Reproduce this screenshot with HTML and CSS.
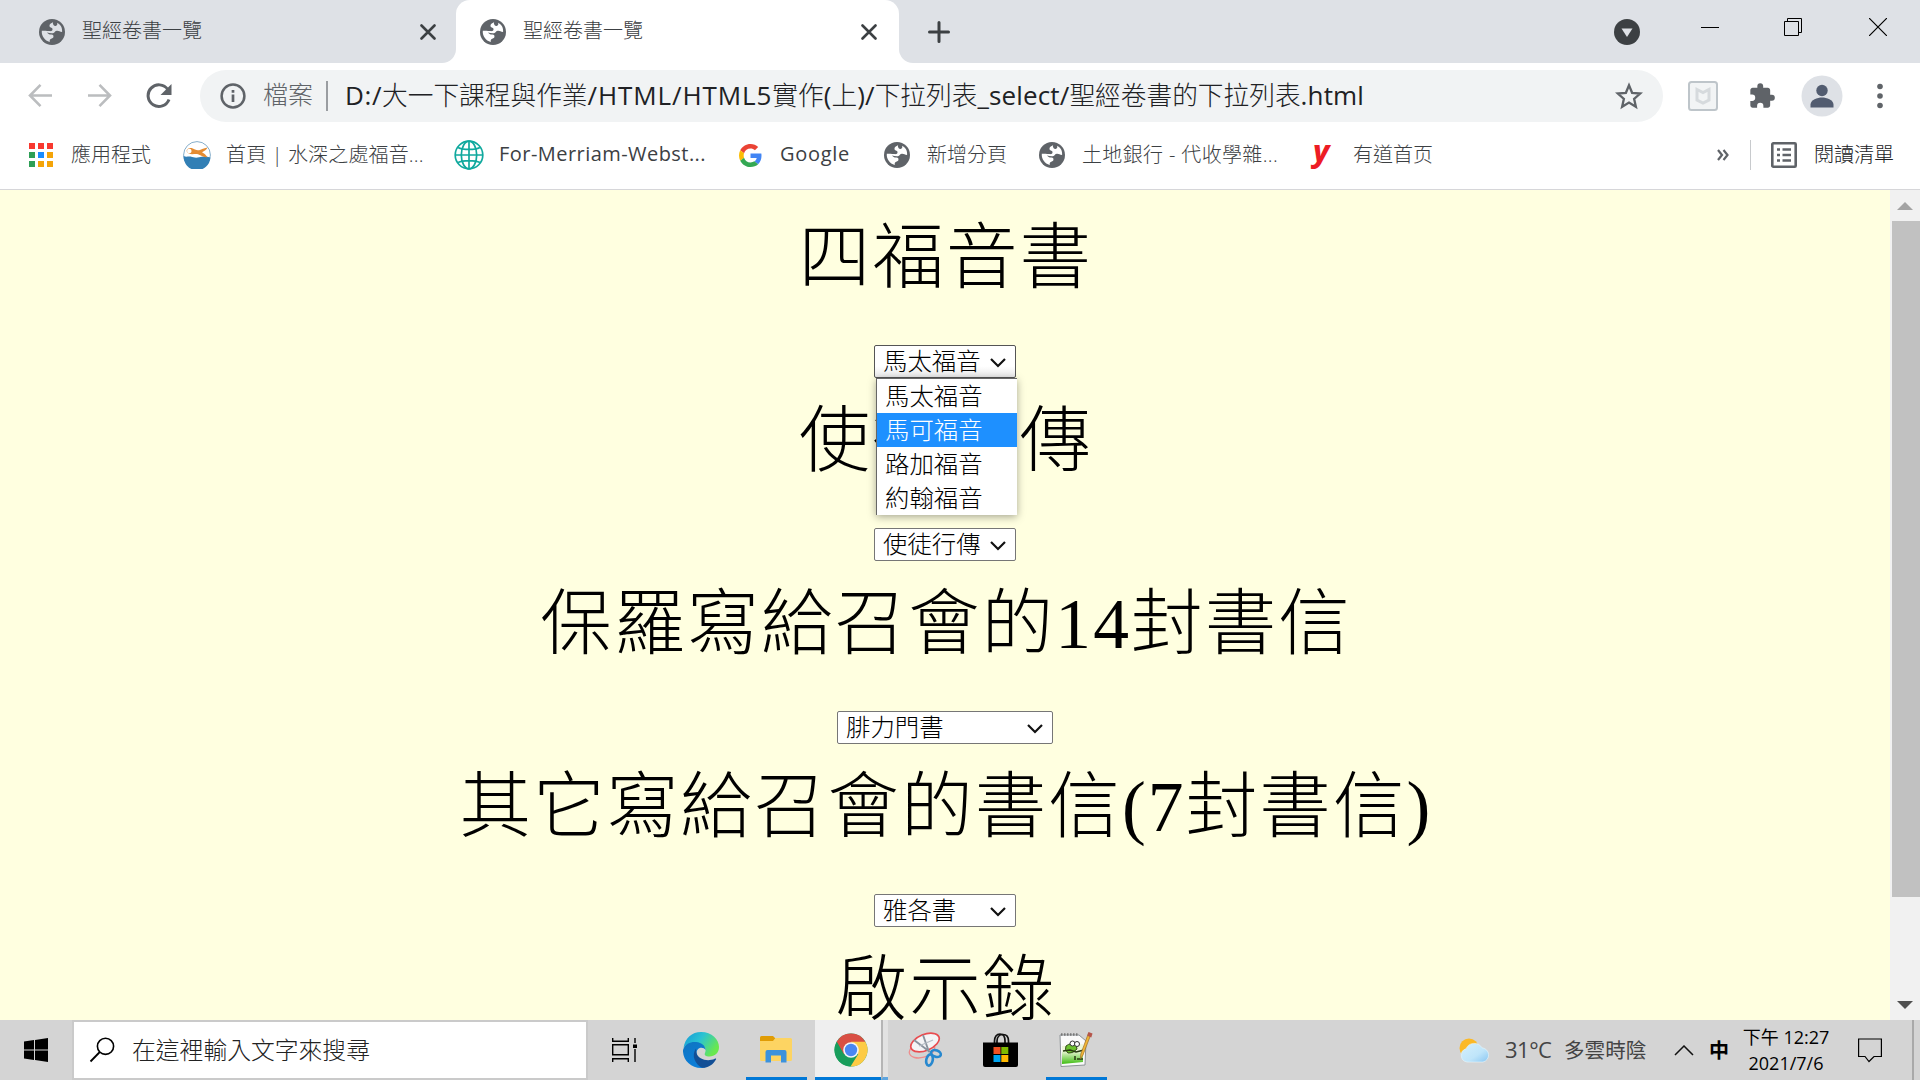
FILE: index.html
```html
<!DOCTYPE html>
<html lang="zh-Hant">
<head>
<meta charset="utf-8">
<title>聖經卷書一覽</title>
<link rel="stylesheet" href="styles.css">
</head>
<body>
<svg class="defs" width="0" height="0" aria-hidden="true">
  <symbol id="globe" viewBox="0 0 26 26">
    <circle cx="13" cy="13" r="13" fill="#5f6368"/>
    <path d="M14.500 2.800c-1 1.200-4 1.500-4 4 0 2.200 2.600 1.300 3 3.200.3 1.700-1.300 2.300-3.200 2.100-1.800-.2-3.300-.6-7.500-.4-.5 5.300 3 9.900 8 11.200-.3-1.700 0-2.600 1.400-3.200 1.600-.7 2.600-1.200 2.200-3-.3-1.300-2-1.200-3.500-1.200-1.100 0-1.900-.9-2.900-1.900 2.200.3 5 1 6.600.3 1.800-.8 1.300-2 3.300-2.100 2.200-.1 2.800 1 5.200 1.300.5-4.500-1.700-7.600-5-9.300.6 1.800-.1 3-1.500 3.200-1.700.2-2.300-1.200-2.600-2.200-.2-.8-.1-1.300.5-2z" fill="var(--land)"/>
  </symbol>
  <symbol id="close" viewBox="0 0 16 16"><path d="M1.500 1.500l13 13M14.500 1.500l-13 13" stroke="#3c4043" stroke-width="2.600" stroke-linecap="round"/></symbol>
  <symbol id="arrow" viewBox="0 0 18 11"><path d="M2 2l7 7 7-7" fill="none" stroke="#111" stroke-width="2.200"/></symbol>
</svg>

<header class="browser">
  <div class="tabstrip">
    <div class="tab">
      <svg class="favicon"><use href="#globe"/></svg>
      <span class="tab-title">聖經卷書一覽</span>
      <svg class="tab-close"><use href="#close"/></svg>
    </div>
    <div class="tab active">
      <svg class="favicon"><use href="#globe"/></svg>
      <span class="tab-title">聖經卷書一覽</span>
      <svg class="tab-close"><use href="#close"/></svg>
    </div>
    <div class="strip-rest">
      <svg class="plus" width="22" height="22" viewBox="0 0 22 22"><path d="M11 1.500v19M1.500 11h19" stroke="#3c4043" stroke-width="3" stroke-linecap="round"/></svg>
      <svg class="tab-search" width="26" height="26" viewBox="0 0 26 26"><circle cx="13" cy="13" r="13" fill="#3c4043"/><path d="M7.500 9.500h11L13 18z" fill="#dee1e6"/></svg>
      <div class="window-buttons">
        <svg width="18" height="18" viewBox="0 0 18 18"><path d="M0 9.500h18" stroke="#000"/></svg>
        <svg width="18" height="18" viewBox="0 0 18 18"><path d="M.5 3.500h14v14H.5zM3.500 3.500v-3h14v14h-3" fill="none" stroke="#000"/></svg>
        <svg width="18" height="18" viewBox="0 0 18 18"><path d="M0 0l18 18M18 0L0 18" stroke="#000" stroke-width="1.200"/></svg>
      </div>
    </div>
  </div>

  <div class="toolbar">
    <div class="nav">
      <svg width="25" height="25" viewBox="0 0 25 25"><path d="M24 12.500H2.500M12.500 1.800L2 12.500l10.500 10.700" fill="none" stroke="#bbbdbf" stroke-width="2.600"/></svg>
      <svg width="25" height="25" viewBox="0 0 25 25"><path d="M1 12.500h21.500M12.500 1.800L23 12.500 12.500 23.200" fill="none" stroke="#bbbdbf" stroke-width="2.600"/></svg>
      <svg width="26" height="26" viewBox="0 0 26 26"><path d="M21.800 6.500A10.800 10.800 0 1 0 23 16.500" fill="none" stroke="#5f6368" stroke-width="3"/><path d="M25.500 1v11H14.500z" fill="#5f6368"/></svg>
    </div>
    <div class="omnibox">
      <svg class="info" width="26" height="26" viewBox="0 0 26 26"><circle cx="13" cy="13" r="11.400" fill="none" stroke="#5f6368" stroke-width="2.500"/><path d="M13 11.500v7.500M13 7v2.700" stroke="#5f6368" stroke-width="2.700"/></svg>
      <span class="scheme">檔案</span>
      <span class="url"><span class="latin drive">D:/</span>大一下課程與作業<span class="latin caps">/HTML/HTML5</span>實作<span class="latin">(</span>上<span class="latin">)/</span>下拉列表<span class="latin">_select/</span>聖經卷書的下拉列表<span class="latin">.html</span></span>
      <svg class="star" width="28" height="28" viewBox="0 0 28 28"><path d="M14 3.300l3.100 7.500 8.100.7-6.100 5.300 1.800 8L14 20.600l-6.900 4.200 1.800-8-6.100-5.300 8.100-.7z" fill="none" stroke="#5f6368" stroke-width="2.300"/></svg>
    </div>
    <div class="actions">
      <svg width="30" height="30" viewBox="0 0 30 30"><rect x="1" y="1" width="28" height="28" rx="2.500" fill="#f2f4f5" stroke="#bec5ca" stroke-width="2"/><path d="M9 8.500l6 3 6-3v10.500l-6 3-6-3z" fill="none" stroke="#d6dadd" stroke-width="3"/></svg>
      <svg width="28" height="28" viewBox="0 0 24 24"><path d="M20.500 11H19V7c0-1.100-.9-2-2-2h-4V3.500a2.500 2.500 0 0 0-5 0V5H4c-1.100 0-2 .9-2 2v3.800h1.500a2.700 2.700 0 0 1 0 5.400H2V20c0 1.100.9 2 2 2h3.800v-1.500a2.700 2.700 0 0 1 5.400 0V22H17c1.100 0 2-.9 2-2v-4h1.500a2.500 2.500 0 0 0 0-5z" fill="#5f6368"/></svg>
      <svg width="42" height="42" viewBox="0 0 42 42"><circle cx="21" cy="21" r="20.500" fill="#dee1e6"/><circle cx="21" cy="15.500" r="5.700" fill="#525c70"/><path d="M9.500 32.500v-3c0-4.500 7-7 11.500-7s11.500 2.500 11.500 7v3z" fill="#525c70"/></svg>
      <svg width="6" height="26" viewBox="0 0 6 26"><g fill="#5f6368"><circle cx="3" cy="3.500" r="2.800"/><circle cx="3" cy="13" r="2.800"/><circle cx="3" cy="22.500" r="2.800"/></g></svg>
    </div>
  </div>

  <nav class="bookmarks">
    <div class="bm apps"><svg width="26" height="26" viewBox="0 0 26 26"><path d="M1 1h6v6H1zM10 1h6v6h-6zM19 1h6v6h-6z" fill="#f8382f"/><path d="M1 10h6v6H1zM1 19h6v6H1z" fill="#2e9f56"/><path d="M10 10h6v6h-6z" fill="#1a8cff"/><path d="M19 10h6v6h-6zM10 19h6v6h-6zM19 19h6v6h-6z" fill="#f4a408"/></svg><span>應用程式</span></div>
    <div class="bm fish"><svg width="28" height="28" viewBox="0 0 28 28"><circle cx="14" cy="14" r="13.400" fill="#fff" stroke="#86aecb" stroke-width="1"/><path d="M.6 15c2.800 1.500 4.500 0 7 .6 3 .8 5 1.700 8.500.7 4-1.200 7-1 11.300.2A13.400 13.400 0 0 1 .6 15z" fill="#327fb5"/><path d="M3.500 10C4.500 6.500 8.500 6 12 8.500c2 1 3.500 1 5.500.2 2.500-1 4-1.700 7-2.200-.8 2.500-3 3.500-5.500 4.700 2.200 1 4 2.800 5.500 5-3.500.3-6-1.700-9.500-3-4-.8-9 1.800-11.500-3.200z" fill="#e58c32"/><circle cx="6.300" cy="10" r="2.300" fill="#fff"/></svg><span>首頁 | 水深之處福音...</span></div>
    <div class="bm webster"><svg width="30" height="30" viewBox="0 0 30 30"><g fill="none" stroke="#10a99e" stroke-width="1.700"><circle cx="15" cy="15" r="13.800"/><ellipse cx="15" cy="15" rx="7.700" ry="13.800"/><path d="M15 1v28M1 15h28M4 7.500c5 2.600 17 2.600 22 0M4 22.500c5-2.600 17-2.600 22 0"/></g></svg><span>For-Merriam-Webst...</span></div>
    <div class="bm google"><svg width="23" height="23" viewBox="0 0 48 48"><path fill="#ea4335" d="M24 9.500c3.540 0 6.710 1.220 9.210 3.600l6.850-6.850C35.900 2.380 30.470 0 24 0 14.620 0 6.510 5.380 2.560 13.220l7.980 6.190C12.430 13.720 17.740 9.500 24 9.500z"/><path fill="#4285f4" d="M46.980 24.550c0-1.570-.15-3.090-.38-4.550H24v9.020h12.940c-.58 2.960-2.260 5.480-4.780 7.180l7.730 6c4.510-4.180 7.090-10.360 7.090-17.650z"/><path fill="#fbbc05" d="M10.530 28.590c-.48-1.450-.76-2.990-.76-4.590s.27-3.140.76-4.590l-7.980-6.190C.92 16.460 0 20.120 0 24c0 3.880.92 7.540 2.560 10.780l7.970-6.190z"/><path fill="#34a853" d="M24 48c6.480 0 11.930-2.130 15.890-5.810l-7.730-6c-2.150 1.450-4.920 2.300-8.160 2.300-6.260 0-11.570-4.220-13.470-9.910l-7.980 6.190C6.510 42.620 14.620 48 24 48z"/></svg><span>Google</span></div>
    <div class="bm newtab"><svg class="favicon"><use href="#globe"/></svg><span>新增分頁</span></div>
    <div class="bm bank"><svg class="favicon"><use href="#globe"/></svg><span>土地銀行 - 代收學雜...</span></div>
    <div class="bm youdao"><b class="y">y</b><span>有道首页</span></div>
    <div class="overflow">
      <svg width="12" height="12" viewBox="0 0 12 12"><path d="M1 1l4 5-4 5M6.500 1l4 5-4 5" fill="none" stroke="#5f6368" stroke-width="2.200"/></svg>
      <i class="divider"></i>
      <svg width="26" height="26" viewBox="0 0 26 26"><rect x="1.300" y="1.300" width="23.400" height="23.400" rx="1" fill="none" stroke="#5f6368" stroke-width="2.600"/><path d="M6 7.500h3M6 13h3M6 18.500h3M11.500 7.500H20M11.500 13H20M11.500 18.500H20" stroke="#5f6368" stroke-width="2.500"/></svg>
      <span>閱讀清單</span>
    </div>
  </nav>
</header>

<div class="viewport">
  <main class="page">
    <section class="group">
      <h1>四福音書</h1>
      <div class="select open">馬太福音<svg class="caret"><use href="#arrow"/></svg>
        <ul class="options">
          <li>馬太福音</li>
          <li class="current">馬可福音</li>
          <li>路加福音</li>
          <li>約翰福音</li>
        </ul>
      </div>
    </section>
    <section class="group">
      <h1>使徒行傳</h1>
      <div class="select">使徒行傳<svg class="caret"><use href="#arrow"/></svg></div>
    </section>
    <section class="group">
      <h1>保羅寫給召會的14封書信</h1>
      <div class="select wide">腓力門書<svg class="caret"><use href="#arrow"/></svg></div>
    </section>
    <section class="group">
      <h1>其它寫給召會的書信(7封書信)</h1>
      <div class="select">雅各書<svg class="caret"><use href="#arrow"/></svg></div>
    </section>
    <section class="group">
      <h1>啟示錄</h1>
    </section>
  </main>
  <div class="scrollbar">
    <svg width="16" height="8" viewBox="0 0 16 8"><path d="M8 0l8 8H0z" fill="#a3a3a3"/></svg>
    <div class="thumb"></div>
    <svg width="16" height="8" viewBox="0 0 16 8"><path d="M0 0h16L8 8z" fill="#505050"/></svg>
  </div>
</div>

<footer class="taskbar">
  <div class="start"><svg width="24" height="24" viewBox="0 0 24 24"><path d="M0 3.400L10 2v9.500H0zM11 1.900L24 0v11.500H11zM0 12.500h10V22L0 20.600zM11 12.500h13V24l-13-1.900z"/></svg></div>
  <div class="search">
    <svg width="26" height="26" viewBox="0 0 26 26"><circle cx="16.500" cy="9.300" r="8.100" fill="none" stroke="#000" stroke-width="1.600"/><path d="M10.800 15L1.500 24.500" stroke="#000" stroke-width="1.800"/></svg>
    <span>在這裡輸入文字來搜尋</span>
  </div>
  <div class="task view"><svg width="26" height="24" viewBox="0 0 26 24"><path d="M.7 0v3.300h15.600V0M.7 6.700h15.600v10H.7zM.7 24v-3.300h15.600V24M23 0v5M23 11v13" fill="none" stroke="#000" stroke-width="1.400"/><path d="M21 6.500h4v3.500h-4z"/></svg></div>
  <div class="task edge"><svg width="36" height="36" viewBox="0 0 36 36">
    <defs><linearGradient id="e1" x1="0" y1="0" x2="1" y2=".5"><stop offset="0" stop-color="#1598d8"/><stop offset=".5" stop-color="#2bc3d2"/><stop offset="1" stop-color="#69e84e"/></linearGradient><linearGradient id="e2" x1="0" y1="0" x2=".6" y2="1"><stop offset="0" stop-color="#1074c0"/><stop offset="1" stop-color="#0a7fdc"/></linearGradient></defs>
    <path d="M.5 16C2 6 9 0 18 0c11 0 18 7.500 18 15 0 6-4.500 9.500-9.500 9.500-4 0-5.500-1.500-4.500-3.500 1.500-3 .5-7-5-8.500C10 10.500 3 12 .5 16z" fill="url(#e1)"/>
    <path d="M0 18C2 11.500 8 9.500 13 10c6 .5 9.500 4 9.500 8-2-3.500-9-3-9 3.500 0 8 8.500 12 16 8.500C26 34 22 36 18 36 8 36-.5 28 0 18z" fill="url(#e2)"/>
    <path d="M13 16.500c-5 7-1 15.500 6 19.300 6 .2 11-3 14-8.300.5-1-.5-1.200-1.300-.8C25 30 15 27.500 13.500 21c-.4-1.700-.3-3-.5-4.500z" fill="#124f96"/></svg></div>
  <div class="task files running"><svg width="32" height="27" viewBox="0 0 32 27"><path d="M0 1.500Q0 0 1.500 0H13l2.500 2.500L13 6H0z" fill="#e09c05"/><path d="M0 5h13l2.500-3H30.500Q32 2 32 3.500V23.500Q32 25 30.500 25H1.500Q0 25 0 23.500z" fill="#fdd462"/><path d="M5.500 26.500V16Q5.500 14 7.500 14h17Q26.500 14 26.500 16V26.500h-5.500V19.500H11v7z" fill="#3c92dc"/></svg></div>
  <div class="task chrome running"><svg width="34" height="34" viewBox="0 0 34 34"><circle cx="17" cy="17" r="16.500" fill="#189d5b"/><path d="M17 17L2.700 8.700A16.500 16.500 0 0 1 31.300 8.700z" fill="#d94f44"/><path d="M17 8.700h14.300A16.500 16.500 0 0 1 16.500 33.500L24.200 21.200z" fill="#fdcb45"/><path d="M2.700 8.700l7 12.500L17 17V8.700z" fill="#d94f44"/><path d="M2.700 8.700l7.200 12.500L17 25.300l-.5 8.200A16.500 16.500 0 0 1 2.700 8.700z" fill="#189d5b"/><circle cx="17" cy="17" r="7.800" fill="#f4f5f6"/><circle cx="17" cy="17" r="6.200" fill="#4a87f2"/></svg></div>
  <div class="stack"></div>
  <div class="task snip"><svg width="36" height="36" viewBox="0 0 36 36"><ellipse cx="14" cy="18" rx="13" ry="7.500" transform="rotate(-15 14 18)" fill="none" stroke="#ee8d8d" stroke-width="1.300"/><ellipse cx="17" cy="10.500" rx="15" ry="8" transform="rotate(-22 17 10.500)" fill="#f4f4f6" stroke="#e94c50" stroke-width="1.700"/><path d="M6 8l16 12M15 3l6 17" stroke="#8a939e" stroke-width="1.900"/><path d="M11 14l14-6" stroke="#b5bcc4" stroke-width="1.200"/><g fill="none" stroke="#2788cf" stroke-width="2.600"><ellipse cx="28" cy="21.500" rx="5" ry="3.200" transform="rotate(20 28 21.500)"/><ellipse cx="21.500" cy="28" rx="3.200" ry="5.700" transform="rotate(12 21.500 28)"/></g></svg></div>
  <div class="task store"><svg width="35" height="35" viewBox="0 0 35 35"><path d="M11.500 11V8c0-4 2-7 5.500-7s5 3 5 7v3M14 11V8c0-4 2.500-6.500 6-6.500S25.500 4 25.500 8v3" fill="none" stroke="#111" stroke-width="1.700"/><path d="M0 9.500h35V32q0 2-2 2H2q-2 0-2-2z"/><path d="M10.500 14h7v7h-7z" fill="#f25022"/><path d="M18.300 14h7v7h-7z" fill="#7fba00"/><path d="M10.500 22h7v7h-7z" fill="#00a4ef"/><path d="M18.300 22h7v7h-7z" fill="#ffb900"/></svg></div>
  <div class="task notepad running"><svg width="36" height="36" viewBox="0 0 36 36"><defs><linearGradient id="n1" x1="0" y1="0" x2="0" y2="1"><stop offset=".35" stop-color="#edf7d8"/><stop offset="1" stop-color="#3fbd12"/></linearGradient></defs><path d="M1 3h19l7 6-1 24-24 1.500z" fill="#fafafa" stroke="#8c9296"/><path d="M3 14l21-2v18L3 32z" fill="url(#n1)"/><path d="M2 2.500h17" stroke="#777" stroke-width="2.500" stroke-dasharray="1.500 1.500"/><path d="M7 14q5-4 10-1l1 4q-4 5-9 4-4-3-2-7z" fill="#6cc22e" stroke="#344b1b"/><circle cx="13.500" cy="11.500" r="2.500" fill="#fff" stroke="#333"/><circle cx="18" cy="12" r="2.500" fill="#fff" stroke="#333"/><path d="M4 19l7-1 6 2 8-2M16 24v4M18 27h6" stroke="#273911" stroke-width="1.500" fill="none"/><path d="M32 2l-8 21-2.500 4 .3-5L29.500 1z" fill="#f3b636" stroke="#986d26" stroke-width=".7"/><path d="M29.500 0l4 1.500-1.200 4-4-1.700z" fill="#b5564b"/></svg></div>
  <div class="tray">
    <svg class="cloud" width="31" height="25" viewBox="0 0 31 25"><defs><linearGradient id="w" x1="0" y1="0" x2="1" y2="1"><stop offset="0" stop-color="#d5f0fc"/><stop offset=".6" stop-color="#bfe5fa"/><stop offset="1" stop-color="#89c6f2"/></linearGradient></defs><circle cx="10" cy="10" r="9.500" fill="#fbb927"/><path d="M8 24a6.800 6.800 0 0 1-1-13.200A9 9 0 0 1 23 9.800a7.200 7.200 0 0 1 1 14.200z" fill="url(#w)" stroke="#e6f6fd" stroke-width=".6"/></svg>
    <span class="temp">31°C</span>
    <span class="sky">多雲時陰</span>
    <svg class="up" width="20" height="11" viewBox="0 0 20 11"><path d="M1 10l9-9 9 9" fill="none" stroke="#111" stroke-width="1.500"/></svg>
    <span class="ime">中</span>
    <div class="clock"><span>下午 12:27</span><span>2021/7/6</span></div>
    <svg class="note" width="24" height="25" viewBox="0 0 24 25"><path d="M.6 1h22.800v17.500h-7.400l-5 5-4-5H.6z" fill="none" stroke="#000" stroke-width="1.200"/></svg>
    <div class="peek"></div>
  </div>
</footer>
</body>
</html>
```
FILE: styles.css
```css
* { box-sizing: border-box; }
body {
  margin: 0;
  width: 1920px;
  height: 1080px;
  overflow: hidden;
  display: flex;
  flex-direction: column;
  font-family: "Open Sans", "Noto Sans CJK TC", sans-serif;
  font-weight: 300;
  color: #3c4043;
  white-space: nowrap;
}
svg { display: block; flex: none; }
.defs { position: absolute; }

/* Browser frame */
.browser { height: 190px; flex: none; background: #fff; border-bottom: 1px solid #d6d6d9; }
.tabstrip { display: flex; height: 63px; background: linear-gradient(#dee1e6 0 20px, #fff 20px); }
.tab {
  --land: #dee1e6;
  display: flex;
  align-items: center;
  width: 456px;
  padding: 0 20px 0 39px;
  background: #dee1e6;
  border-bottom-right-radius: 14px;
}
.tab.active {
  --land: #fff;
  width: 443px;
  padding: 0 22px 0 24px;
  background: #fff;
  border-radius: 14px 14px 0 0;
}
.favicon { width: 26px; height: 26px; }
.tab-title { flex: 1; margin-left: 17px; font-size: 20px; line-height: 60px; padding-bottom: 1px; }
.tab-close { width: 16px; height: 16px; }
.strip-rest {
  flex: 1;
  display: flex;
  align-items: center;
  background: #dee1e6;
  border-bottom-left-radius: 14px;
  padding: 0 33px 0 29px;
}
.tab-search { margin-left: auto; }
.window-buttons { display: flex; gap: 66px; margin: -9px 0 0 61px; }
.window-buttons svg:first-child { margin-right: -1px; }
.window-buttons svg:nth-child(2) { margin-right: 1px; }

.toolbar { display: flex; align-items: center; height: 66px; }
.nav { display: flex; gap: 34px; width: 200px; padding-left: 28px; }
.omnibox {
  display: flex;
  align-items: center;
  width: 1463px;
  height: 52px;
  padding: 0 20px;
  border-radius: 26px;
  background: #f1f3f4;
  font-size: 25.700px;
}
.scheme {
  margin-left: 17px;
  width: 65px;
  height: 30px;
  color: #5f6368;
  font-size: 25px;
  line-height: 26px;
  border-right: 2px solid #9a9da1;
}
.url { margin-left: 17px; padding-bottom: 4px; color: #202124; }
.latin { font-weight: 400; font-size: 26px; letter-spacing: 0.150px; }
.latin.drive { letter-spacing: 0.600px; }
.latin.caps { letter-spacing: 0.900px; }
.star { margin-left: auto; }
.actions { display: flex; align-items: center; margin-left: 25px; }
.actions svg:nth-child(2) { margin-left: 30px; }
.actions svg:nth-child(3) { margin-left: 25px; }
.actions svg:nth-child(4) { margin-left: 34px; }

.bookmarks { --land: #fff; display: flex; align-items: center; height: 52px; padding-left: 28px; font-size: 20px; }
.bm { display: flex; align-items: center; flex: none; }
.bm span, .overflow span { margin-left: 17px; padding-bottom: 3px; }
.apps { width: 155px; }
.fish { width: 271px; }
.fish span { margin-left: 15px; letter-spacing: 0.150px; }
.webster { width: 285px; }
.webster span { font-weight: 400; margin-left: 15px; letter-spacing: 0.450px; }
.google { width: 145px; }
.google span { font-weight: 400; margin-left: 18px; letter-spacing: 0.700px; }
.newtab { width: 155px; }
.bank { width: 273px; }
.bank span { letter-spacing: 0.350px; }
.y { width: 20px; margin: -10px 0 0 1px; font: italic 800 31px/26px "Noto Sans", sans-serif; color: #ed1c24; }
.youdao span { margin-left: 20px; }
.overflow { display: flex; align-items: center; margin-left: auto; padding-right: 26px; color: #202124; }
.divider { width: 1px; height: 30px; margin: 0 20px 0 21px; background: #c8cacd; }

/* Document */
.viewport { display: flex; height: 830px; flex: none; }
.page { width: 1890px; padding-top: 20px; background: #ffffe0; color: #000; overflow: hidden; }
.group { display: flex; flex-direction: column; align-items: center; height: 183px; }
h1 {
  margin: 0 0 39px;
  padding-left: 2px;
  font: 300 71.500px/96px "Liberation Serif", "Noto Sans CJK TC", serif;
  letter-spacing: 2.100px;
}
.select {
  position: relative;
  display: flex;
  align-items: center;
  justify-content: space-between;
  width: 142px;
  height: 33px;
  padding: 0 8px 4px;
  border: 1px solid #767676;
  border-radius: 2px;
  background: #fff;
  font: 300 24.400px/28px "Noto Sans CJK TC", sans-serif;
}
.select.wide { width: 216px; }
.select.open { border-color: #555; background: linear-gradient(#fff 65%, #e9e9e9); }
.caret { width: 18px; height: 11px; margin-top: 5px; }
.options {
  position: absolute;
  z-index: 2;
  left: 1px;
  top: 32px;
  width: 141px;
  margin: 0;
  padding: 0;
  list-style: none;
  background: #fff;
  border: solid #666;
  border-width: 1px 0 0 1px;
  box-shadow: 0 2px 8px rgba(0, 0, 0, .35);
}
.options li { height: 34px; line-height: 32px; padding-left: 8px; }
.options .current { background: #1e90ff; color: #fff; }
.scrollbar {
  display: flex;
  flex-direction: column;
  align-items: center;
  width: 30px;
  padding: 12px 0 11px;
  background: #f1f1f1;
}
.thumb { width: 28px; height: 676px; margin: 11px 0 auto 1px; background: #c1c1c1; }

/* Taskbar */
.taskbar { display: flex; align-items: center; height: 60px; background: #d4d4d4; color: #000; }
.start { width: 72px; padding-left: 24px; }
.search {
  display: flex;
  align-items: center;
  gap: 17px;
  width: 516px;
  height: 60px;
  padding-left: 15px;
  background: #fff;
  border: 2px solid #cacaca;
  color: #222;
  font-size: 23.800px;
}
.search span { padding-bottom: 3px; }
.task { display: flex; align-items: center; justify-content: center; height: 60px; width: 61px; }
.running { border-bottom: 3px solid #0078d7; padding-top: 2px; }
.view { width: 50px; margin-left: 12px; }
.edge { margin-left: 20px; }
.files { margin-left: 15px; }
.files svg { margin-right: 1px; }
.chrome { width: 66px; margin-left: 8px; padding-left: 5px; background: #efefef; }
.stack { width: 7px; height: 60px; background: #e2e2e2; border-left: 2px solid #b5b5b5; border-bottom: 3px solid #5ea5df; }
.snip { margin-left: 8px; }
.snip svg { margin-right: 2px; }
.store { margin-left: 13px; }
.notepad { margin-left: 15px; }
.tray { display: flex; align-items: center; flex: 1; padding-left: 352px; }
.temp { width: 59px; margin-left: 15px; padding-bottom: 2px; font-size: 22px; font-weight: 400; color: #444; letter-spacing: -0.500px; }
.sky { width: 110px; padding-bottom: 2px; font-size: 20.600px; font-weight: 400; color: #444; }
.ime { width: 20px; margin: 0 15px; padding-bottom: 2px; font-size: 20px; font-weight: 700; }
.clock { display: flex; flex-direction: column; width: 84px; align-items: center; padding-bottom: 1px; font-size: 18px; line-height: 26px; font-weight: 400; }
.note { margin-left: 30px; }
.peek { width: 8px; height: 60px; margin-left: auto; border-left: 2px solid #a9a9a9; }
```
